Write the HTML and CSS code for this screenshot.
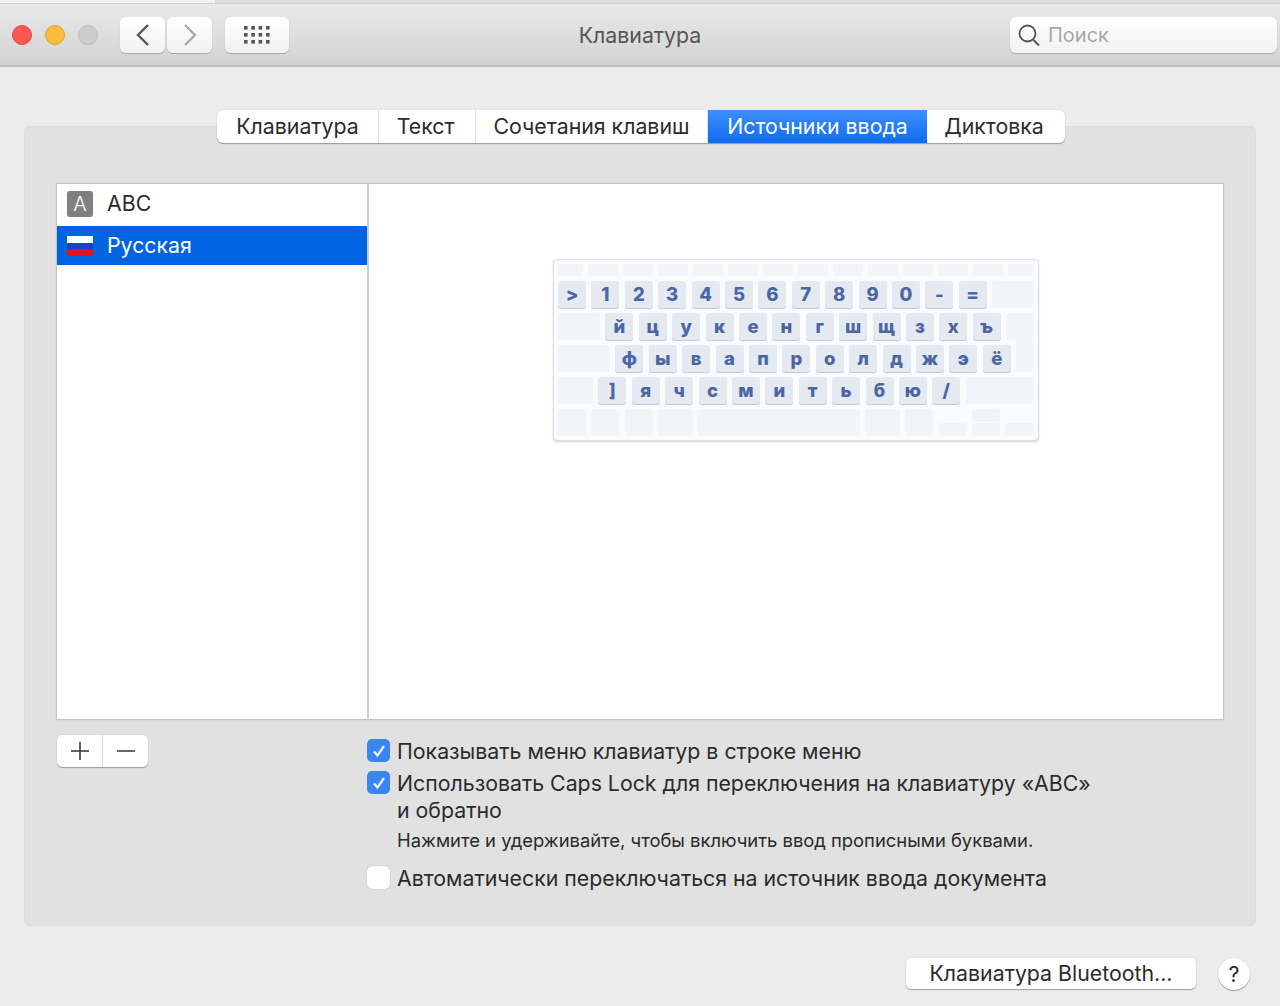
FILE: index.html
```html
<!DOCTYPE html>
<html lang="ru">
<head>
<meta charset="utf-8">
<title>Клавиатура</title>
<link rel="stylesheet" href="styles.css">
</head>
<body>
<header class="window-top">
  <div class="strip"><span class="strip-left"></span></div>
  <div class="toolbar">
    <div class="lights">
      <span class="light red"></span>
      <span class="light yellow"></span>
      <span class="light grey"></span>
    </div>
    <div class="nav">
      <button class="tool-btn nav-btn"><svg width="16" height="24" viewBox="0 0 16 24"><path d="M13 2 3 12l10 10" fill="none" stroke="#555" stroke-width="2.4"/></svg></button>
      <button class="tool-btn nav-btn"><svg width="16" height="24" viewBox="0 0 16 24"><path d="M3 2l10 10L3 22" fill="none" stroke="#a9a9a9" stroke-width="2.4"/></svg></button>
    </div>
    <button class="tool-btn grid-btn">
      <svg width="26" height="18" viewBox="0 0 26 18" fill="#555">
        <rect x="0" y="0" width="3.6" height="3.6"/><rect x="7.3" y="0" width="3.6" height="3.6"/><rect x="14.6" y="0" width="3.6" height="3.6"/><rect x="22" y="0" width="3.6" height="3.6"/>
        <rect x="0" y="7" width="3.6" height="3.6"/><rect x="7.3" y="7" width="3.6" height="3.6"/><rect x="14.6" y="7" width="3.6" height="3.6"/><rect x="22" y="7" width="3.6" height="3.6"/>
        <rect x="0" y="14" width="3.6" height="3.6"/><rect x="7.3" y="14" width="3.6" height="3.6"/><rect x="14.6" y="14" width="3.6" height="3.6"/><rect x="22" y="14" width="3.6" height="3.6"/>
      </svg>
    </button>
    <div class="title">Клавиатура</div>
    <div class="search">
      <svg width="22" height="24" viewBox="0 0 22 24"><circle cx="9.5" cy="10.500" r="8" fill="none" stroke="#555" stroke-width="1.800"/><path d="M15 16.500l6 6" stroke="#555" stroke-width="2" fill="none"/></svg>
      <span>Поиск</span>
    </div>
  </div>
</header>

<main class="panel">
  <nav class="tabs">
    <div class="tab">Клавиатура</div>
    <div class="tab">Текст</div>
    <div class="tab">Сочетания клавиш</div>
    <div class="tab active">Источники ввода</div>
    <div class="tab">Диктовка</div>
  </nav>

  <section class="split">
    <div class="sources">
      <div class="source">
        <span class="abc-icon">A</span>
        <span class="source-name">ABC</span>
      </div>
      <div class="source selected">
        <svg class="flag" width="26" height="20" viewBox="0 0 26 20"><rect width="26" height="7" fill="#fff"/><rect y="7" width="26" height="6.500" fill="#1b3fd0"/><rect y="13.500" width="26" height="6.500" fill="#e8101c"/></svg>
        <span>Русская</span>
      </div>
    </div>
    <div class="preview">
      <div class="keyboard">
        <div class="kb-row fn">
          <i class="blank w25"></i><i class="blank w30"></i><i class="blank w30"></i><i class="blank w30"></i><i class="blank w30"></i><i class="blank w30"></i><i class="blank w30"></i><i class="blank w30"></i><i class="blank w30"></i><i class="blank w30"></i><i class="blank w30"></i><i class="blank w30"></i><i class="blank w30"></i><i class="blank w25"></i>
        </div>
        <div class="kb-row">
          <b class="key">&gt;</b><b class="key">1</b><b class="key">2</b><b class="key">3</b><b class="key">4</b><b class="key">5</b><b class="key">6</b><b class="key">7</b><b class="key">8</b><b class="key">9</b><b class="key">0</b><b class="key">-</b><b class="key">=</b><i class="blank grow"></i>
        </div>
        <div class="kb-row">
          <i class="blank w42"></i><b class="key">й</b><b class="key">ц</b><b class="key">у</b><b class="key">к</b><b class="key">е</b><b class="key">н</b><b class="key">г</b><b class="key">ш</b><b class="key">щ</b><b class="key">з</b><b class="key">х</b><b class="key">ъ</b><i class="blank grow"></i>
        </div>
        <div class="kb-row">
          <i class="blank w52"></i><b class="key">ф</b><b class="key">ы</b><b class="key">в</b><b class="key">а</b><b class="key">п</b><b class="key">р</b><b class="key">о</b><b class="key">л</b><b class="key">д</b><b class="key">ж</b><b class="key">э</b><b class="key">ё</b><i class="blank grow enter"></i>
        </div>
        <div class="kb-row">
          <i class="blank w35"></i><b class="key">]</b><b class="key">я</b><b class="key">ч</b><b class="key">с</b><b class="key">м</b><b class="key">и</b><b class="key">т</b><b class="key">ь</b><b class="key">б</b><b class="key">ю</b><b class="key">/</b><i class="blank grow"></i>
        </div>
        <div class="kb-row">
          <i class="blank w28"></i><i class="blank w28"></i><i class="blank w28"></i><i class="blank w35"></i><i class="blank w162"></i><i class="blank w35"></i><i class="blank w28"></i>
          <div class="arrow-col"><i class="blank half"></i></div>
          <div class="arrow-col"><i class="blank half"></i><i class="blank half"></i></div>
          <div class="arrow-col"><i class="blank half"></i></div>
        </div>
      </div>
    </div>
  </section>

  <section class="controls">
    <div class="stepper">
      <button class="step"><svg width="20" height="20" viewBox="0 0 20 20"><path d="M10 1v18M1 10h18" stroke="#333" stroke-width="1.500" fill="none"/></svg></button>
      <button class="step"><svg width="20" height="20" viewBox="0 0 20 20"><path d="M1 10h18" stroke="#333" stroke-width="1.500" fill="none"/></svg></button>
    </div>
    <div class="options">
      <div class="option">
        <span class="check on"><svg width="16" height="16" viewBox="0 0 16 16"><path d="M3 8.500l3.500 4L13 3" fill="none" stroke="#fff" stroke-width="2.200"/></svg></span>
        <span>Показывать меню клавиатур в строке меню</span>
      </div>
      <div class="option second">
        <span class="check on"><svg width="16" height="16" viewBox="0 0 16 16"><path d="M3 8.500l3.500 4L13 3" fill="none" stroke="#fff" stroke-width="2.200"/></svg></span>
        <span>Использовать Caps Lock для переключения на клавиатуру «ABC»<br>и обратно</span>
      </div>
      <p class="hint">Нажмите и удерживайте, чтобы включить ввод прописными буквами.</p>
      <div class="option third">
        <span class="check"></span>
        <span>Автоматически переключаться на источник ввода документа</span>
      </div>
    </div>
  </section>
</main>

<footer class="footer">
  <button class="bt-btn">Клавиатура Bluetooth...</button>
  <button class="help">?</button>
</footer>
</body>
</html>
```
FILE: styles.css
```css
* { box-sizing: border-box; }
html, body { margin: 0; padding: 0; height: 1006px; overflow: hidden; }
body {
  background: #ececec;
  color: #2b2b2b;
  font-family: "Inter", "Liberation Sans", sans-serif;
  font-size: 21.3px;
  line-height: 27px;
}
button { font: inherit; color: inherit; border: 0; padding: 0; }

.window-top { height: 67px; }
.strip { height: 3px; background: #dcdcdc; display: flex; }
.strip-left { width: 215px; background: #f3f3f3; }
.toolbar {
  height: 64px;
  display: flex;
  align-items: center;
  padding: 1px 3px 0 12px;
  background: linear-gradient(#e9e9e9, #d3d3d3);
  border-top: 1px solid #d0d0d0;
  border-bottom: 2px solid #bcbcbc;
}
.lights { display: flex; gap: 13px; width: 108px; }
.light { width: 20px; height: 20px; border-radius: 50%; }
.red { background: #fc5753; border: 1px solid #e0443e; }
.yellow { background: #fdbc40; border: 1px solid #dea123; }
.grey { background: #cdcdcd; border: 1px solid #bcbcbc; }
.tool-btn {
  height: 36px;
  border-radius: 6px;
  background: linear-gradient(#fff, #f1f1f1);
  box-shadow: 0 1px 1px rgba(0,0,0,.22);
  display: flex;
  align-items: center;
  justify-content: center;
}
.nav { display: flex; gap: 2px; }
.nav-btn { width: 45px; }
.grid-btn { width: 64px; margin-left: 13px; }
.title {
  flex: 1;
  text-align: center;
  color: #555;
  padding-right: 19px;
}
.search {
  width: 267px;
  height: 36px;
  border-radius: 6px;
  background: linear-gradient(#fff, #f2f2f2);
  box-shadow: 0 1px 1px rgba(0,0,0,.22);
  display: flex;
  align-items: center;
  gap: 8px;
  padding-left: 8px;
  color: #a8a8a8;
  font-size: 20px;
}

.panel {
  display: flow-root;
  height: 800px;
  margin: 59px 24px 0;
  padding: 0 32px;
  background: #e1e1e1;
  border-radius: 6px;
  box-shadow: inset 0 0 0 1px #dcdcdc;
}
.tabs {
  display: grid;
  grid-template-columns: 162px 97px 232px 219px 138px;
  width: 848px;
  height: 33px;
  margin: -16px 0 0 161px;
  background: #fff;
  border-radius: 6px;
  box-shadow: 0 1px 1px rgba(0,0,0,.3), 0 0 1px rgba(0,0,0,.2);
}
.tab {
  text-align: center;
  line-height: 33px;
  border-right: 1px solid #dedede;
}
.tab:nth-child(2) { padding-right: 3px; }
.tab:last-child { border-right: 0; padding-right: 4px; }
.tab.active {
  color: #fff;
  background: linear-gradient(#3f8efc, #0f6cf0);
  border-right: 0;
}

.split {
  display: flex;
  height: 537px;
  margin-top: 40px;
  background: #fff;
  border: 1px solid #c4c4c4;
  box-shadow: 0 0 1px #c4c4c4;
}
.sources { width: 312px; border-right: 2px solid #cfcfcf; }
.source {
  height: 42px;
  display: flex;
  align-items: center;
  gap: 14px;
  padding-left: 10px;
}
.source-name { margin-top: -4px; }
.source.selected { height: 39px; background: #0064e1; color: #fff; }
.flag { margin-top: 1px; }
.abc-icon {
  width: 26px;
  height: 26px;
  margin-top: -2px;
  border-radius: 3px;
  background: #808080;
  color: #fff;
  font-size: 20px;
  font-weight: 300;
  line-height: 26px;
  text-align: center;
}
.preview { flex: 1; display: flex; justify-content: center; align-items: flex-start; padding-top: 75px; }

.keyboard {
  width: 486px;
  height: 182px;
  padding: 4px 5px 4px 4px;
  background: #fafbfd;
  border: 1px solid #dde0e4;
  border-radius: 4px;
  box-shadow: 0 1px 2px rgba(0,0,0,.18);
  display: flex;
  flex-direction: column;
  gap: 5px;
}
.kb-row { display: flex; gap: 5.4px; height: 27px; }
.kb-row.fn { height: 13px; gap: 5px; }
.blank { display: block; background: #f1f4f9; border-radius: 3px; }
.key {
  width: 28px;
  background: #e4e9f2;
  border-radius: 3px;
  box-shadow: 0 1px 0 #c4cad6;
  color: #4a67a3;
  font-size: 18.5px;
  font-weight: 800;
  line-height: 27px;
  text-align: center;
}
.grow { flex: 1; }
.enter { margin-top: -5px; }
.w25 { width: 25px; }
.w28 { width: 28px; }
.w30 { width: 30px; }
.w35 { width: 35px; }
.w42 { width: 42px; }
.w52 { width: 52px; }
.w162 { width: 162px; }
.arrow-col { width: 28px; display: flex; flex-direction: column; justify-content: flex-end; gap: 1px; }
.half { height: 13px; }

.controls {
  display: grid;
  grid-template-columns: 311px 1fr;
  margin-top: 15px;
}
.stepper {
  width: 91px;
  height: 32px;
  margin-left: 1px;
  display: flex;
  background: #fff;
  border-radius: 5px;
  box-shadow: 0 1px 1px rgba(0,0,0,.3), 0 0 1px rgba(0,0,0,.2);
}
.step {
  flex: 1;
  background: none;
  display: flex;
  align-items: center;
  justify-content: center;
}
.step:first-child { border-right: 1px solid #dedede; }
.options { padding-top: 3px; }
.option { display: flex; gap: 7px; }
.second { margin-top: 5px; }
.third { margin-top: 13px; }
.check {
  flex: none;
  width: 23px;
  height: 23px;
  margin-top: 1px;
  border-radius: 5px;
  background: #fff;
  box-shadow: 0 0 1px rgba(0,0,0,.45);
  display: flex;
  align-items: center;
  justify-content: center;
}
.check.on { background: #3b86f7; box-shadow: none; }
.hint {
  margin: 4px 0 0 30px;
  font-size: 18.4px;
  line-height: 24px;
}

.footer {
  display: flex;
  justify-content: flex-end;
  align-items: flex-start;
  gap: 22px;
  margin-top: 32px;
  padding-right: 30px;
}
.bt-btn {
  width: 290px;
  height: 31px;
  background: #fff;
  border-radius: 5px;
  box-shadow: 0 1px 1px rgba(0,0,0,.3), 0 0 1px rgba(0,0,0,.2);
  line-height: 31px;
}
.help {
  width: 32px;
  height: 32px;
  border-radius: 50%;
  background: #fff;
  box-shadow: 0 1px 1px rgba(0,0,0,.3), 0 0 1px rgba(0,0,0,.2);
  line-height: 32px;
}
```
